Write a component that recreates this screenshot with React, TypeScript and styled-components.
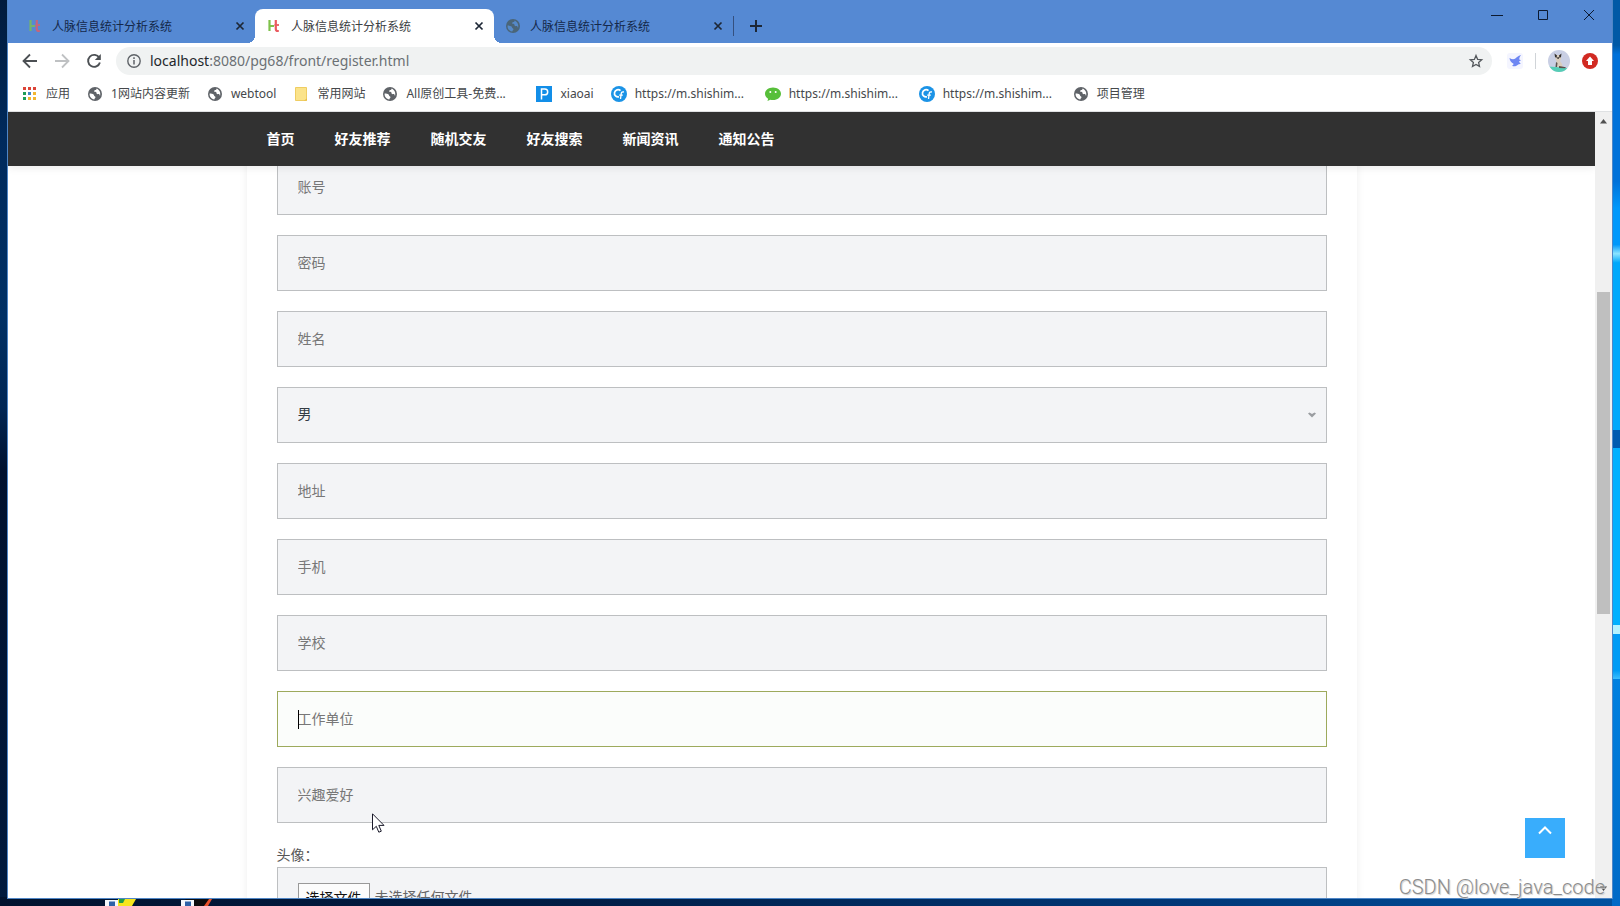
import React from "react";
import styled, { createGlobalStyle, css } from "styled-components";

const GlobalStyle = createGlobalStyle`
  * { box-sizing: border-box; }
  html, body { margin: 0; padding: 0; }
  body, button, input, select {
    font-family: "Noto Sans", "Noto Sans CJK SC", sans-serif;
  }
  a { color: inherit; text-decoration: none; }
  button { border: 0; padding: 0; background: none; }
`;

/* ---------- desktop and window frame ---------- */

const Desktop = styled.div`
  position: relative;
  display: flex;
  height: 100vh;
  overflow: hidden;
  padding: 0 8px 8px;
  background:
    linear-gradient(
        #0059a6 0 5%,
        #0071d9 6% 20%,
        #0098fb 23% 27%,
        #8ce4ff 28%,
        #00a8fb 29% 47%,
        #00a8fb 47.5%,
        #005bb0 47.5% 49.5%,
        #00b0ff 49.5% 69%,
        #b4f2ff 69% 70%,
        #009bf5 70% 74%,
        #3fc0ff 75%,
        #0080e0 75%,
        #0069c6 100%
      )
      right top / 8px 100% no-repeat,
    linear-gradient(90deg, #00122e, #001d45 35%, #00397a 75%, #0052a0) left bottom / 100% 9px no-repeat,
    linear-gradient(#001b3c, #002a5c 15%, #003064 35%, #002654 45%, #00112e 52%, #001a3e);
`;

const Window = styled.div`
  flex: 1;
  min-width: 0;
  display: flex;
  flex-direction: column;
  background: #fff;
  box-shadow: 0 0 0 1px #4f86c6;
`;

const TaskIcons = styled.div`
  position: absolute;
  left: 105px;
  bottom: 0;
  display: flex;
  gap: 44px;
`;

/* ---------- tab strip ---------- */

const TabStrip = styled.header`
  display: flex;
  align-items: flex-end;
  height: 43px;
  padding-left: 8px;
  background: #5589d3;
`;

const Tab = styled.div<{ $active?: boolean }>`
  position: relative;
  display: flex;
  align-items: center;
  width: 239px;
  height: 34px;
  padding: 0 7px 0 11px;
  border-radius: 8px 8px 0 0;
  color: ${(p) => (p.$active ? "#3c4043" : "#14284a")};
  ${(p) =>
    p.$active &&
    css`
      background: #fff;
      &::before,
      &::after {
        content: "";
        position: absolute;
        bottom: 0;
        width: 8px;
        height: 8px;
      }
      &::before {
        right: 100%;
        background: radial-gradient(circle at 0 0, transparent 8px, #fff 8px);
      }
      &::after {
        left: 100%;
        background: radial-gradient(circle at 100% 0, transparent 8px, #fff 8px);
      }
    `}
`;

const TabTitle = styled.span`
  flex: 1;
  margin-left: 9px;
  padding-top: 2px;
  font-size: 12px;
  line-height: 16px;
  white-space: nowrap;
`;

const TabButton = styled.button`
  display: grid;
  place-items: center;
  width: 16px;
  height: 16px;
  color: #1d2736;
`;

const NewTab = styled.div`
  display: flex;
  align-items: center;
  height: 34px;
  padding-left: 14px;
`;

const TabDivider = styled.span`
  width: 1px;
  height: 20px;
  margin-bottom: 7px;
  background: #34507f;
`;

const WindowButtons = styled.div`
  display: flex;
  align-self: flex-start;
  margin-left: auto;
`;

const WindowButton = styled.button`
  display: grid;
  place-items: center;
  width: 46px;
  height: 30px;
  color: #0c1a30;
`;

/* ---------- toolbar ---------- */

const Toolbar = styled.div`
  display: flex;
  align-items: center;
  height: 36px;
  padding: 0 14px 0 6px;
`;

const ToolButton = styled.button<{ $muted?: boolean }>`
  display: grid;
  place-items: center;
  width: 32px;
  height: 32px;
  color: ${(p) => (p.$muted ? "#bfc1c3" : "#4c5054")};
`;

const AddressBar = styled.div`
  flex: 1;
  display: flex;
  align-items: center;
  height: 28px;
  margin: 0 15px 0 6px;
  padding: 0 8px 0 10px;
  border-radius: 14px;
  background: #f0f2f2;
`;

const AddressText = styled.div`
  flex: 1;
  margin-left: 8px;
  font-size: 14px;
  line-height: 20px;
  color: #6b7074;
  b {
    font-weight: 400;
    color: #23272b;
  }
`;

const ToolEnd = styled.div`
  display: flex;
  align-items: center;
  gap: 12px;
`;

const ToolDivider = styled.span`
  width: 1px;
  height: 16px;
  background: #d0d4d8;
`;

/* ---------- bookmarks ---------- */

const Bookmarks = styled.nav`
  display: flex;
  align-items: center;
  gap: 17px;
  height: 33px;
  padding: 0 14px 3px;
  border-bottom: 1px solid #dfe1e3;
`;

const Bookmark = styled.a<{ $cut?: boolean }>`
  display: flex;
  align-items: center;
  gap: 8px;
  font-size: 12px;
  line-height: 16px;
  color: #45484b;
  white-space: nowrap;
  ${(p) =>
    p.$cut &&
    css`
      width: 137px;
    `}
`;

/* ---------- web page ---------- */

const Viewport = styled.div`
  flex: 1;
  min-height: 0;
  display: flex;
`;

const Page = styled.div`
  position: relative;
  flex: 1;
  min-width: 0;
  display: flex;
  flex-direction: column;
  overflow: hidden;
`;

const SiteNav = styled.nav`
  position: relative;
  z-index: 1;
  flex: none;
  background: #313131;
  box-shadow: 0 2px 8px rgba(0, 0, 0, 0.08);
`;

const SiteNavInner = styled.div`
  display: flex;
  align-items: center;
  gap: 40px;
  width: 100%;
  max-width: 1110px;
  height: 54px;
  margin: 0 auto;
  padding: 0 20px 2px;
  font-size: 14px;
  font-weight: 700;
  color: #fff;
`;

const Scroller = styled.main`
  flex: 1;
  min-height: 0;
  overflow: hidden;
`;

const Form = styled.form`
  display: flex;
  flex-direction: column;
  gap: 20px;
  width: 100%;
  max-width: 1110px;
  margin: -37px auto 0;
  padding: 30px;
  box-shadow: 0 0 8px rgba(0, 0, 0, 0.07);
`;

const fieldStyle = css`
  display: block;
  width: 100%;
  height: 56px;
  padding: 0 20px 2px;
  border: 1px solid #bdbfc1;
  border-radius: 0;
  outline: 0;
  background: #f3f4f6;
  font-size: 14px;
  line-height: 20px;
  color: #333b44;
`;

const Field = styled.div`
  position: relative;
`;

const TextInput = styled.input<{ $focused?: boolean }>`
  ${fieldStyle}
  &::placeholder {
    color: #777;
    opacity: 1;
  }
  ${(p) =>
    p.$focused &&
    css`
      background: #fbfdfb;
      border-color: #9daa5c;
    `}
`;

const Select = styled.select`
  ${fieldStyle}
  appearance: none;
`;

const SelectArrow = styled.svg`
  position: absolute;
  right: 11px;
  top: 25px;
  pointer-events: none;
`;

const Caret = styled.span`
  position: absolute;
  left: 21px;
  top: 19px;
  width: 1px;
  height: 19px;
  background: #000;
`;

const FileGroup = styled.div`
  display: flex;
  flex-direction: column;
  padding-top: 2px;
  font-size: 14px;
  line-height: 20px;
  color: #555;
`;

const FileBox = styled.label`
  ${fieldStyle}
  display: flex;
  align-items: flex-start;
  gap: 5px;
  height: 64px;
  margin-top: 2px;
  padding-top: 15px;
  line-height: 28px;
  color: #666;
`;

const FileButton = styled.span`
  padding: 0 7px;
  border: 1px solid #999;
  background: #fcfcfc;
  color: #111;
`;

const HiddenFile = styled.input`
  position: absolute;
  width: 1px;
  height: 1px;
  opacity: 0;
`;

const ToTop = styled.button`
  position: absolute;
  right: 30px;
  bottom: 40px;
  display: flex;
  justify-content: center;
  width: 40px;
  height: 40px;
  padding-top: 8px;
  background: #39adfc;
`;

const ScrollTrack = styled.div`
  display: flex;
  flex-direction: column;
  align-items: center;
  width: 17px;
  padding: 7px 0;
  background: #f0f0f0;
`;

const ScrollGap = styled.span<{ $grow: number }>`
  flex: ${(p) => p.$grow} 1 0;
`;

const ScrollThumb = styled.span`
  flex: 322 1 0;
  width: 13px;
  background: #bfbfbf;
`;

const Watermark = styled.div`
  position: absolute;
  right: 15px;
  bottom: 7px;
  font-family: Roboto, sans-serif;
  font-size: 20px;
  font-weight: 300;
  line-height: 24px;
  color: #8c8c8c;
  text-shadow: 1px 1px 1px #ccc;
`;

const Pointer = styled.svg`
  position: absolute;
  left: 372px;
  top: 813px;
`;

/* ---------- icons ---------- */

const Globe = ({ color = "#5f6368", land = "#fff" }: { color?: string; land?: string }) => (
  <svg width="16" height="16" viewBox="0 0 16 16" aria-hidden>
    <circle cx="8" cy="8" r="7" fill={color} />
    <path
      d="M2.600 7.600c1.600.2 3.200.1 4 .9.7.7.2 1.300 1 1.700.8.300.9.700.8 1.400-.1.700-.9.800-1.100 2C4.500 13.200 2.300 10.800 2.600 7.600zM9.600 2.500c.2.900-.6 1.500-1.400 1.600-.9.100-.9.900-1.100 1.500.6.500 1.700.1 2.300.8.400.6 0 1.300.6 1.600.8.400 1.500-.3 2.200.3.500.4.300 1.200.9 1.500.8-3.300-.8-6.200-3.500-7.300z"
      fill={land}
    />
  </svg>
);

const HtIcon = ({ dim }: { dim?: boolean }) => (
  <svg width="16" height="16" viewBox="0 0 16 16" aria-hidden opacity={dim ? 0.75 : 1}>
    <path d="M3.500 2v11M3.500 8h4.500" stroke="#7fc24b" strokeWidth="2.200" fill="none" />
    <path d="M9.800 2v9q0 2 2 2h1" stroke="#ea5a5f" strokeWidth="2.200" fill="none" />
    <path d="M8.500 7h4.500" stroke="#ea5a5f" strokeWidth="1.800" fill="none" />
  </svg>
);

const Cross = () => (
  <svg width="10" height="10" viewBox="0 0 10 10" aria-hidden>
    <path d="M1.500 1.500l7 7m0-7l-7 7" stroke="currentColor" strokeWidth="1.700" />
  </svg>
);

const AppsIcon = () => (
  <svg width="16" height="16" viewBox="0 0 16 16" aria-hidden>
    {["#dc4437", "#dc4437", "#dc4437", "#1e9d57", "#4285c4", "#f2b630", "#1e9d57", "#f2b630", "#f2b630"].map(
      (fill, i) => (
        <rect key={i} x={1 + (i % 3) * 5} y={1 + Math.floor(i / 3) * 5} width="3" height="3" fill={fill} />
      ),
    )}
  </svg>
);

const FolderIcon = () => (
  <svg width="16" height="16" viewBox="0 0 16 16" aria-hidden>
    <path d="M2.500 1.500h11v13h-11z" fill="#fbe38a" stroke="#efcd62" />
    <path d="M11 14.500l3-2v2z" fill="#e9bd42" />
  </svg>
);

const SquareP = () => (
  <svg width="16" height="16" viewBox="0 0 16 16" aria-hidden>
    <rect width="16" height="16" fill="#128ee8" />
    <path d="M5.500 13.500V3h3.300a2.800 2.800 0 010 5.800H5.500" fill="none" stroke="#fff" strokeWidth="1.500" />
  </svg>
);

const CfIcon = () => (
  <svg width="16" height="16" viewBox="0 0 16 16" aria-hidden>
    <circle cx="8" cy="8" r="8" fill="#1b93e6" />
    <path d="M9.500 4.700A3.600 3.600 0 108 10.800" fill="none" stroke="#fff" strokeWidth="1.700" />
    <path d="M13 6q-2.500-.5-2.800 1.700l-.7 5.300M8.200 9.200h3.600" fill="none" stroke="#fff" strokeWidth="1.300" />
  </svg>
);

const ChatIcon = () => (
  <svg width="16" height="16" viewBox="0 0 16 16" aria-hidden>
    <path
      d="M8 1.500c4.500 0 8 2.800 8 6.300s-3.500 6.300-8 6.300c-1 0-1.900-.1-2.700-.4L2.500 15l.6-2.300C1.200 11.500 0 9.800 0 7.800 0 4.300 3.500 1.500 8 1.500z"
      fill="#57bf3a"
    />
    <circle cx="5.300" cy="6" r="1" fill="#fff" />
    <circle cx="10.700" cy="6" r="1" fill="#fff" />
  </svg>
);

const BirdIcon = () => (
  <svg width="16" height="16" viewBox="0 0 16 16" aria-hidden>
    <rect width="16" height="16" rx="3" fill="#f4f5ff" />
    <path
      d="M2.500 5c2.200 1.400 4 1.500 5.500.8C9.500 4.500 11 2.800 14 2c-1.200 1.600-1.800 3-1.700 4.500l1.700.8-1.900.9c.2 1.200.9 2.100 1.900 2.800-1.600-.2-2.500.1-3.400 1-1.700 1.600-3.800 1.700-5.600.8 1.200-.6 1.600-1.200 1.500-2C4.300 9.700 2.800 7.800 2.500 5z"
      fill="#6d86f3"
    />
  </svg>
);

const Avatar = () => (
  <svg width="22" height="22" viewBox="0 0 22 22" aria-hidden>
    <clipPath id="avatarClip">
      <circle cx="11" cy="11" r="11" />
    </clipPath>
    <g clipPath="url(#avatarClip)">
      <rect width="22" height="22" fill="#c9cfe4" />
      <path d="M0 16.500q11 .5 22 2V22H0z" fill="#55cdb6" />
      <path d="M7.500 5h5.500v4l-1 2q2.500 2.500 2.500 6H8l.5-6-1-2z" fill="#d9cdbd" />
      <path d="M6.500 3.500L9 5.500 8.500 8 7 7zM13.500 3.500L11 5.500l.5 2.500L13 7zM9.200 7.200h1.800v1.600H9.200z" fill="#34302f" />
      <path d="M8 12l1.500 1-.5 4H7.500zM11 16l7 1.300-1 .9-6-.3z" fill="#5a514c" />
    </g>
  </svg>
);

const bookmarks = [
  { text: "应用", icon: <AppsIcon /> },
  { text: "1网站内容更新", icon: <Globe /> },
  { text: "webtool", icon: <Globe /> },
  { text: "常用网站", icon: <FolderIcon /> },
  { text: "All原创工具-免费...", icon: <Globe />, cut: true },
  { text: "xiaoai", icon: <SquareP /> },
  { text: "https://m.shishim...", icon: <CfIcon />, cut: true },
  { text: "https://m.shishim...", icon: <ChatIcon />, cut: true },
  { text: "https://m.shishim...", icon: <CfIcon />, cut: true },
  { text: "项目管理", icon: <Globe /> },
];

const title = "人脉信息统计分析系统";

const tabs = [
  { icon: <HtIcon dim /> },
  { icon: <HtIcon />, active: true },
  { icon: <Globe color="#4a6578" land="#5589c8" /> },
];

const navItems = ["首页", "好友推荐", "随机交友", "好友搜索", "新闻资讯", "通知公告"];

const TextField = ({ label, focused, type = "text" }: { label: string; focused?: boolean; type?: string }) => (
  <Field>
    <TextInput type={type} placeholder={label} aria-label={label} $focused={focused} />
    {focused && <Caret />}
  </Field>
);

export default function App() {
  return (
    <>
      <GlobalStyle />
      <Desktop>
        <Window>
          <TabStrip>
            {tabs.map((tab, i) => (
              <Tab key={i} $active={tab.active}>
                {tab.icon}
                <TabTitle>{title}</TabTitle>
                <TabButton aria-label="关闭标签页">
                  <Cross />
                </TabButton>
              </Tab>
            ))}
            <TabDivider />
            <NewTab>
              <TabButton aria-label="新标签页">
                <svg width="12" height="12" viewBox="0 0 12 12" aria-hidden>
                  <path d="M6 0v12M0 6h12" stroke="currentColor" strokeWidth="2" />
                </svg>
              </TabButton>
            </NewTab>
            <WindowButtons>
              <WindowButton aria-label="最小化">
                <svg width="12" height="12" viewBox="0 0 12 12" aria-hidden>
                  <path d="M0 6.500h12" stroke="currentColor" />
                </svg>
              </WindowButton>
              <WindowButton aria-label="最大化">
                <svg width="12" height="12" viewBox="0 0 12 12" aria-hidden>
                  <path d="M1.500 1.500h9v9h-9z" stroke="currentColor" fill="none" />
                </svg>
              </WindowButton>
              <WindowButton aria-label="关闭">
                <svg width="12" height="12" viewBox="0 0 12 12" aria-hidden>
                  <path d="M1 1l10 10m0-10L1 11" stroke="currentColor" />
                </svg>
              </WindowButton>
            </WindowButtons>
          </TabStrip>

          <Toolbar>
            <ToolButton aria-label="后退">
              <svg width="16" height="16" viewBox="0 0 16 16" aria-hidden>
                <path d="M15 8H2M8 1.500L1.500 8 8 14.500" fill="none" stroke="currentColor" strokeWidth="1.800" />
              </svg>
            </ToolButton>
            <ToolButton $muted aria-label="前进">
              <svg width="16" height="16" viewBox="0 0 16 16" aria-hidden>
                <path d="M1 8h13M8 1.500L14.500 8 8 14.500" fill="none" stroke="currentColor" strokeWidth="1.800" />
              </svg>
            </ToolButton>
            <ToolButton aria-label="重新加载">
              <svg width="16" height="16" viewBox="0 0 16 16" aria-hidden>
                <path d="M13.300 4.800A6 6 0 1013.900 9.500" fill="none" stroke="currentColor" strokeWidth="1.900" />
                <path d="M14.800 1v6H8.800z" fill="currentColor" />
              </svg>
            </ToolButton>
            <AddressBar>
              <svg width="16" height="16" viewBox="0 0 16 16" aria-hidden>
                <circle cx="8" cy="8" r="6.200" fill="none" stroke="#5f6368" strokeWidth="1.400" />
                <path d="M8 7v4.500M8 4.300v1.600" stroke="#5f6368" strokeWidth="1.500" />
              </svg>
              <AddressText>
                <b>localhost</b>:8080/pg68/front/register.html
              </AddressText>
              <svg width="16" height="16" viewBox="0 0 16 16" aria-hidden>
                <path
                  d="M8 2.500l1.600 3.800 4.100.4-3.100 2.700.9 4L8 11.400l-3.500 2.100.9-4-3.100-2.700 4.100-.4z"
                  fill="none"
                  stroke="#55595d"
                  strokeWidth="1.300"
                />
              </svg>
            </AddressBar>
            <ToolEnd>
              <BirdIcon />
              <ToolDivider />
              <Avatar />
              <svg width="16" height="16" viewBox="0 0 16 16" aria-hidden>
                <circle cx="8" cy="8" r="8" fill="#d12a22" />
                <path d="M8 3.500l4 4.500H10v4H6V8H4z" fill="#fff" />
              </svg>
            </ToolEnd>
          </Toolbar>

          <Bookmarks aria-label="书签栏">
            {bookmarks.map((b, i) => (
              <Bookmark key={i} href="#" $cut={b.cut}>
                {b.icon}
                {b.text}
              </Bookmark>
            ))}
          </Bookmarks>

          <Viewport>
            <Page>
              <SiteNav>
                <SiteNavInner>
                  {navItems.map((item) => (
                    <a href="#" key={item}>
                      {item}
                    </a>
                  ))}
                </SiteNavInner>
              </SiteNav>
              <Scroller>
                <Form>
                  <TextField label="账号" />
                  <TextField label="密码" type="password" />
                  <TextField label="姓名" />
                  <Field>
                    <Select aria-label="性别" defaultValue="男">
                      <option>男</option>
                      <option>女</option>
                    </Select>
                    <SelectArrow width="8" height="6" viewBox="0 0 8 6" aria-hidden>
                      <path d="M0 1.500L1.500.5 4 2 6.500.5 8 1.500 4 5.500z" fill="#9a9da1" />
                    </SelectArrow>
                  </Field>
                  <TextField label="地址" />
                  <TextField label="手机" />
                  <TextField label="学校" />
                  <TextField label="工作单位" focused />
                  <TextField label="兴趣爱好" />
                  <FileGroup>
                    <span>头像：</span>
                    <FileBox>
                      <HiddenFile type="file" aria-label="头像" />
                      <FileButton>选择文件</FileButton>
                      未选择任何文件
                    </FileBox>
                  </FileGroup>
                </Form>
              </Scroller>
              <ToTop aria-label="返回顶部">
                <svg width="14" height="9" viewBox="0 0 14 9" aria-hidden>
                  <path d="M1 7.500l6-6 6 6" fill="none" stroke="#fff" strokeWidth="2" />
                </svg>
              </ToTop>
            </Page>
            <ScrollTrack>
              <svg width="7" height="5" viewBox="0 0 7 5" aria-hidden>
                <path d="M3.500 0L7 4.500H0z" fill="#505050" />
              </svg>
              <ScrollGap $grow={168} />
              <ScrollThumb />
              <ScrollGap $grow={272} />
              <svg width="7" height="5" viewBox="0 0 7 5" aria-hidden>
                <path d="M3.500 5L7 .5H0z" fill="#404040" />
              </svg>
            </ScrollTrack>
          </Viewport>
        </Window>

        <TaskIcons aria-hidden>
          <svg width="32" height="7" viewBox="0 0 32 7">
            <path d="M13 0h18l-4 7H13z" fill="#f6e51c" />
            <path d="M14 0h6l-2 4h-4z" fill="#1f9b49" />
            <path d="M0 1h13v6H0z" fill="#f4f8fc" />
            <path d="M4 2.500h6V7H4z" fill="#2d62a8" />
          </svg>
          <svg width="32" height="7" viewBox="0 0 32 7">
            <path d="M4 0h26l-3 7H12z" fill="#0b0b0d" />
            <path d="M28 0h3l-4 7h-4z" fill="#e8502a" />
            <path d="M0 1h13v6H0z" fill="#f4f8fc" />
            <path d="M4 2.500h6V7H4z" fill="#2d62a8" />
          </svg>
        </TaskIcons>
        <Pointer width="13" height="20" viewBox="0 0 13 20" aria-hidden>
          <path d="M.5 .8v16l3.800-3.500 2.500 5.900 2.500-1-2.500-5.800h5.200z" fill="#fff" stroke="#1b1b2b" />
        </Pointer>
        <Watermark>CSDN @love_java_code</Watermark>
      </Desktop>
    </>
  );
}
